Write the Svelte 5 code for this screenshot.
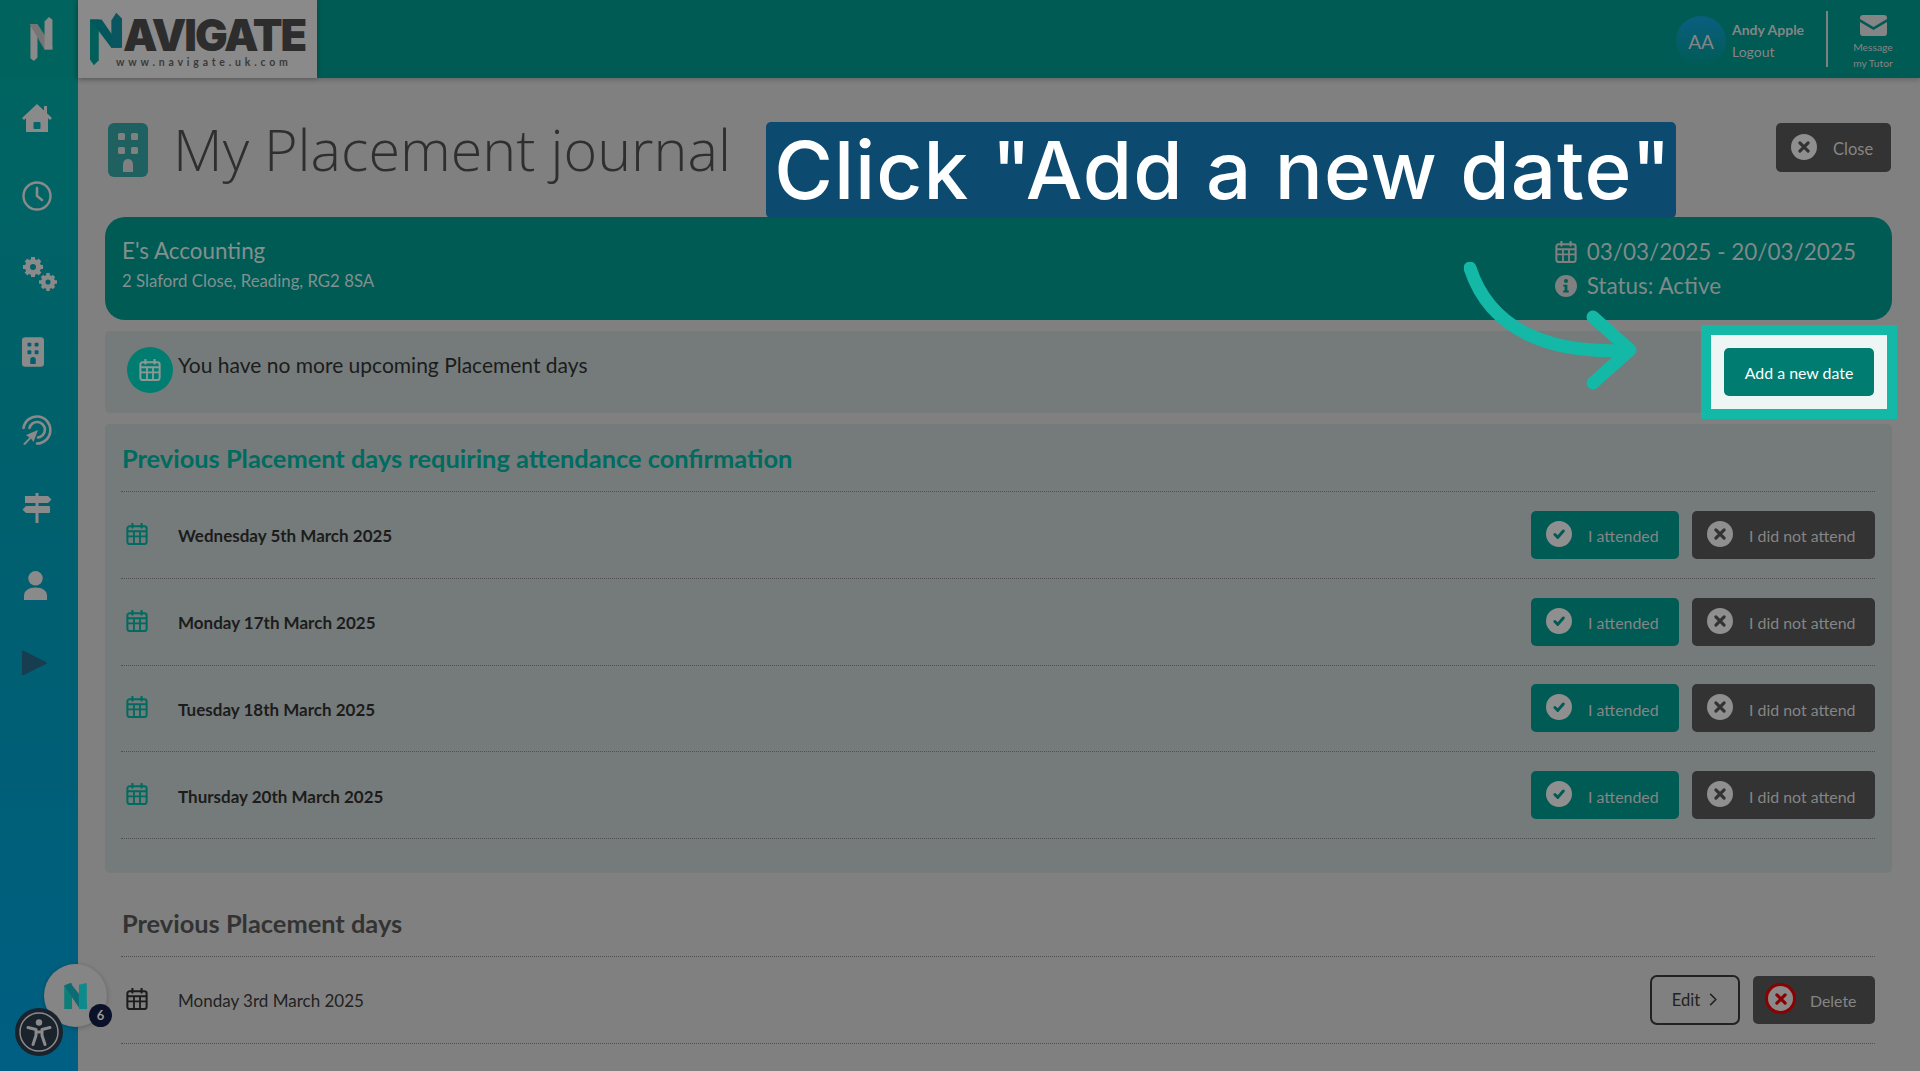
<script>
  const pending = ['Wednesday 5th March 2025', 'Monday 17th March 2025', 'Tuesday 18th March 2025', 'Thursday 20th March 2025'];
</script>

{#snippet cal(cls)}
  <svg class={cls} viewBox="0 0 24 24" aria-hidden="true">
    <path d="M7 1v4M17 1v4" fill="none" stroke="currentColor" stroke-width="2.400" stroke-linecap="round"/>
    <rect x="1.500" y="3.500" width="21" height="19.500" rx="2.500" fill="none" stroke="currentColor" stroke-width="2.200"/>
    <path d="M2 9h20M2 14.500h20M8.700 9v13M15.300 9v13" fill="none" stroke="currentColor" stroke-width="2"/>
  </svg>
{/snippet}
{#snippet cross(cls)}
  <span class={cls}><svg viewBox="0 0 24 24" aria-hidden="true"><path d="M7.500 7.500l9 9M16.500 7.500l-9 9" fill="none" stroke="currentColor" stroke-width="3.400" stroke-linecap="round"/></svg></span>
{/snippet}
{#snippet tick()}
  <span class="ic"><svg viewBox="0 0 24 24" aria-hidden="true"><path d="M7.500 12.500l3.200 3.200 6-7" fill="none" stroke="#005b55" stroke-width="3.200" stroke-linecap="round" stroke-linejoin="round"/></svg></span>
{/snippet}
{#snippet building(cls)}
  <svg class={cls} viewBox="0 0 40 54" aria-hidden="true">
    <rect width="40" height="54" rx="6" fill="currentColor"/>
    <g class="holes"><rect x="10" y="10" width="7" height="7" rx="1.500"/><rect x="23" y="10" width="7" height="7" rx="1.500"/><rect x="10" y="24" width="7" height="7" rx="1.500"/><rect x="23" y="24" width="7" height="7" rx="1.500"/><path d="M15 49v-8a5 5 0 0 1 10 0v8z"/></g>
  </svg>
{/snippet}

<div class="page">
  <aside class="side">
    <div class="brand">
      <svg viewBox="0 0 26 50" class="n" aria-hidden="true">
        <path d="M1 10l8-1v37l-4 4-4-3z" fill="#8a8a8a"/><path d="M0 8h9l17 26v3h-9z" fill="#757575"/><path d="M17 5l5-5 4 3v34h-9z" fill="#8a8a8a"/>
      </svg>
    </div>
    <nav class="nav">
      <span class="slot"><svg viewBox="0 0 30 30" class="si"><path d="M15 1L0 15l2 2 2-1.700V29h22V15.300L28 17l2-2-5-4.700V3h-3v4.500z" fill="currentColor"/><rect x="11.500" y="19" width="7" height="7" rx="1" fill="#01666a"/></svg></span>
      <span class="slot"><svg viewBox="0 0 30 30" class="si"><circle cx="15" cy="15" r="13.500" fill="none" stroke="currentColor" stroke-width="2.400"/><path d="M15 7v8l5 4" fill="none" stroke="currentColor" stroke-width="2.600" stroke-linecap="round"/></svg></span>
      <span class="slot shift"><svg viewBox="0 0 36 36" class="si gears"><g fill="none" stroke="currentColor"><circle cx="11" cy="11" r="5.500" stroke-width="5"/><path d="M11 1v4M11 17v4M1 11h4M17 11h4M4 4l3 3M15 15l3 3M18 4l-3 3M7 15l-3 3" stroke-width="4"/><circle cx="26" cy="26" r="4.800" stroke-width="4.500"/><path d="M26 17v3M26 32v3M17 26h3M32 26h3M20 20l2 2M30 30l2 2M32 20l-2 2M22 30l-2 2" stroke-width="3.500"/></g></svg></span>
      <span class="slot left">{@render building('si bld')}</span>
      <span class="slot"><svg viewBox="0 0 30 30" class="si"><g fill="none" stroke="currentColor" stroke-width="2.600" stroke-linecap="round"><path d="M1.500 13A13.500 13.500 0 1 1 15 28.500"/><path d="M7.500 13A7.800 7.800 0 1 1 16 22.500"/></g><path d="M1 29l6.500-6.500-3.500-2.500 12-5-4.500 12-2.500-3.500L3 30z" fill="currentColor"/></svg></span>
      <span class="slot"><svg viewBox="0 0 30 30" class="si"><path d="M13.500 0h3v3H26l3.500 3.500L26 10H16.500v3H27q1 0 1 1v5q0 1-1 1H16.500v10h-3V20H4L.500 16.500 4 13h9.500v-3H3V3h10.500z" fill="currentColor"/></svg></span>
      <span class="slot left1"><svg viewBox="0 0 26 30" class="si person"><circle cx="13" cy="7.500" r="7.500" fill="currentColor"/><path d="M1 30v-4c0-6 5-9 12-9s12 3 12 9v4z" fill="currentColor"/></svg></span>
      <span class="slot left1"><svg viewBox="0 0 26 28" class="si play"><path d="M2 2l22 11c1 .5 1 1.500 0 2L2 26c-1 .5-2 0-2-1V3c0-1 1-1.500 2-1z" fill="#163e50"/></svg></span>
    </nav>
  </aside>

  <div class="main">
    <header class="top">
      <div class="logo">
        <svg viewBox="0 0 34 54" class="logo-n" aria-hidden="true"><path d="M0 7v41l4 6 5-5V7z" fill="#005f5a"/><path d="M0 7h12l20 29v0H22z" fill="#02575c"/><path d="M22 8l5-8 6 6v30H22z" fill="#0b5560"/></svg>
        <div class="logo-t"><span class="word">AVIGATE</span><span class="url">www.navigate.uk.com</span></div>
      </div>
      <div class="user">
        <span class="avatar">AA</span>
        <span class="who"><b>Andy Apple</b><span>Logout</span></span>
        <i class="rule"></i>
        <span class="msg">
          <svg viewBox="0 0 27 21"><path d="M3 0h21a3 3 0 0 1 3 3v1L13.500 12 0 4V3a3 3 0 0 1 3-3z" fill="#858585"/><path d="M0 7l13.500 8L27 7v11a3 3 0 0 1-3 3H3a3 3 0 0 1-3-3z" fill="#858585"/></svg>
          <small>Message</small><small>my Tutor</small>
        </span>
      </div>
    </header>

    <div class="content">
      <div class="title-row">
        <div class="title">{@render building('t-ic')}<h1>My Placement journal</h1></div>
        <button class="btn dark close">{@render cross('ic')}<span>Close</span></button>
      </div>

      <section class="card">
        <div class="place"><h2>E's Accounting</h2><p>2 Slaford Close, Reading, RG2 8SA</p></div>
        <div class="meta">
          <div>{@render cal('m-ic')}<span>03/03/2025 - 20/03/2025</span></div>
          <div><svg class="m-ic" viewBox="0 0 24 24"><circle cx="12" cy="12" r="12" fill="#808080"/><circle cx="12" cy="6.500" r="2.200" fill="#005b55"/><path d="M9 10.500h4.500V17H15v2H9v-2h1.500v-4.500H9z" fill="#005b55"/></svg><span>Status: Active</span></div>
        </div>
      </section>

      <section class="strip">
        <span class="round">{@render cal('r-ic')}</span>
        <p>You have no more upcoming Placement days</p>
      </section>

      <section class="panel">
        <h3 class="teal">Previous Placement days requiring attendance confirmation</h3>
        {#each pending as d}
          <div class="row">
            {@render cal('d-ic')}
            <b>{d}</b>
            <div class="acts">
              <button class="btn green">{@render tick()}<span>I attended</span></button>
              <button class="btn dark not">{@render cross('ic')}<span>I did not attend</span></button>
            </div>
          </div>
        {/each}
      </section>

      <section class="prev">
        <h3>Previous Placement days</h3>
        <div class="row plain">
          {@render cal('d-ic ink')}
          <span class="date">Monday 3rd March 2025</span>
          <div class="acts">
            <button class="edit">Edit <svg viewBox="0 0 10 16"><path d="M2 2l6 6-6 6" fill="none" stroke="currentColor" stroke-width="1.600"/></svg></button>
            <button class="btn dark del">{@render cross('ic red')}<span>Delete</span></button>
          </div>
        </div>
      </section>
    </div>
  </div>

  <div class="callout">Click "Add a new date"</div>
  <svg class="arrow" viewBox="0 0 180 130" aria-hidden="true">
    <path d="M6 6C26 68 86 93 166 88M129 55l37 33-37 33" fill="none" stroke="#13b8a6" stroke-width="13" stroke-linecap="round" stroke-linejoin="round"/>
  </svg>
  <div class="spot"><button class="add">Add a new date</button></div>

  <div class="fab">
    <svg viewBox="0 0 26 30" aria-hidden="true"><path d="M0 3l9-3v30H0z" fill="#0e7f78"/><path d="M0 3l7-3 19 24v6h-8z" fill="#0d6c73"/><path d="M17 2l9-2v30h-9z" fill="#0c8a8c"/></svg>
    <span class="badge">6</span>
  </div>
  <div class="a11y"><svg viewBox="0 0 40 40" aria-hidden="true"><circle cx="20" cy="20" r="19" fill="none" stroke="#8a8a8a" stroke-width="1.500"/><circle cx="20" cy="10.500" r="3.200" fill="#8a8a8a"/><path d="M9 15.500l8 2v6l-3 9M31 15.500l-8 2v6l3 9M17 20h6" fill="none" stroke="#8a8a8a" stroke-width="3" stroke-linecap="round" stroke-linejoin="round"/></svg></div>
</div>

<style>
  :global(body) { margin: 0; background: #808080; }
  .page { position: relative; display: flex; width: 1920px; height: 1071px; overflow: hidden; font-family: Lato, "Open Sans", sans-serif; background: #808080; color: #1c1c1c; }
  h1, h2, h3, p { margin: 0; }
  button { font: inherit; border: 0; padding: 0; }

  .side { flex: 0 0 78px; background: linear-gradient(180deg, #00655f 0%, #005f72 60%, #005f83 100%); display: flex; flex-direction: column; }
  .brand { height: 78px; display: flex; align-items: center; justify-content: center; background: #00635d; padding-left: 4px; box-sizing: border-box; }
  .n { width: 24px; height: 44px; }
  .nav { display: flex; flex-direction: column; margin-top: 1px; padding-right: 4px; }
  .slot { height: 78px; display: flex; align-items: center; justify-content: center; color: #8a8a8a; }
  .slot.shift { padding-left: 6px; }
  .slot.left { padding-right: 8px; }
  .slot.left1 { padding-right: 4px; }
  .si { width: 30px; height: 30px; }
  .gears { width: 36px; height: 36px; }
  .bld { width: 22px; height: 30px; }
  .bld .holes { fill: #015f72; }
  .person { width: 25px; height: 29px; margin-top: -2px; }
  .play { width: 26px; height: 28px; margin-top: -2px; }

  .main { flex: 1; min-width: 0; display: flex; flex-direction: column; }
  .top { height: 78px; background: #005b55; display: flex; justify-content: space-between; box-shadow: 0 2px 5px rgba(0,0,0,.2); }
  .logo { width: 239px; height: 78px; background: #8a8a8a; display: flex; padding: 12px 0 0 12px; box-sizing: border-box; box-shadow: 0 0 6px rgba(0,0,0,.2); }
  .logo-n { width: 33px; height: 54px; flex: none; }
  .logo-t { display: flex; flex-direction: column; }
  .word { font: 900 43.500px/32px Inter, sans-serif; letter-spacing: -2px; color: #2d2d2d; margin-top: 7px; }
  .url { font: 700 10.500px/14px Lato, sans-serif; letter-spacing: 3.800px; color: #3a3a3a; margin-left: -7px; margin-top: 4px; white-space: nowrap; }

  .user { display: flex; align-items: center; color: #858585; }
  .avatar { width: 50px; height: 50px; border-radius: 50%; background: linear-gradient(180deg, #0a5f80, #005b55); display: flex; align-items: center; justify-content: center; font-size: 19px; margin-top: 4px; }
  .who { display: flex; flex-direction: column; margin-left: 6px; font-size: 14px; line-height: 22px; width: 94px; margin-top: 4px; }
  .who b { font-weight: 700; }
  .rule { width: 2px; height: 56px; background: #808080; }
  .msg { width: 90px; display: flex; flex-direction: column; align-items: center; line-height: 16px; margin-top: 8px; padding-right: 2px; }
  .msg svg { width: 27px; height: 21px; margin-bottom: 3px; }
  .msg small { font-size: 10.300px; white-space: nowrap; }

  .content { padding: 45px 28px 0 27px; }
  .title-row { height: 94px; display: flex; justify-content: space-between; align-items: flex-start; }
  .title { display: flex; align-items: flex-start; padding-left: 3px; }
  .t-ic { width: 40px; height: 54px; color: #1f6060; }
  .t-ic .holes { fill: #808080; }
  h1 { font-family: "Open Sans", sans-serif; font-weight: 300; font-size: 57.500px; line-height: 54px; color: #2f2f2f; margin-left: 25px; margin-top: -1px; white-space: nowrap; }

  .btn { display: flex; align-items: center; height: 48px; border-radius: 5px; box-sizing: border-box; padding-left: 15px; color: #858585; font-size: 15.900px; gap: 16px; }
  .btn span:last-child { margin-top: 2px; }
  .btn.dark { background: #333; }
  .btn.green { background: #005b55; width: 148px; }
  .btn.not { width: 183px; }
  .close { width: 115px; height: 49px; margin-right: 1px; font-size: 16.500px; }
  .ic { width: 26px; height: 26px; border-radius: 50%; background: #8f8f8f; color: #333; display: flex; align-items: center; justify-content: center; margin-top: -2px; flex: none; }
  .ic svg { width: 22px; height: 22px; }
  :global(.ic.red) { width: 25px; height: 25px; color: #8b0000; box-shadow: 0 0 0 3px #8b0000; background: #8a8a8a; margin-left: 1px; }

  .card { height: 103px; background: #005b55; border-radius: 20px; display: flex; justify-content: space-between; padding: 18px 36px 0 17px; box-sizing: border-box; color: #82908e; }
  h2 { font-weight: 400; font-size: 22.400px; line-height: 32px; }
  .card p { font-size: 16.800px; line-height: 28px; }
  .meta { font-size: 22.500px; line-height: 34px; color: #7f8a88; }
  .meta div { display: flex; align-items: center; gap: 10px; }
  .m-ic { width: 22px; height: 22px; color: #808080; }

  .strip { margin-top: 11px; height: 82px; background: #747b7a; border-radius: 5px; display: flex; padding: 16px 22px; box-sizing: border-box; }
  .round { width: 46px; height: 46px; border-radius: 50%; background: #007d70; display: flex; align-items: center; justify-content: center; color: #8b9a98; flex: none; }
  .r-ic { width: 22px; height: 22px; }
  .strip p { font-size: 21px; line-height: 36px; margin-left: 5px; color: #1c1c1c; }

  .panel { margin-top: 11px; background: #747b7a; padding: 0 17px 35px 16px; border-radius: 5px; height: 449px; box-sizing: border-box; }
  h3 { font-size: 25.400px; font-weight: 700; line-height: 69px; height: 67px; padding-left: 1px; border-bottom: 1px dotted #4f4f4f; color: #333; }
  h3.teal { color: #006b60; }
  .row { height: 86.750px; box-sizing: border-box; border-bottom: 1px dotted #4f4f4f; display: flex; align-items: center; font-size: 17px; }
  .row b, .date { margin-top: 2px; }
  .d-ic { width: 22px; height: 22px; color: #006b60; margin: -2px 30px 0 5px; flex: none; }
  :global(.d-ic.ink) { color: #1c1c1c; }
  .acts { margin-left: auto; display: flex; gap: 13px; align-items: center; }

  .prev { margin-top: 16px; padding: 0 17px 0 16px; }
  .plain { color: #222; }
  .edit { width: 90px; height: 50px; border: 2px solid #222; border-radius: 7px; background: transparent; color: #222; font-size: 16.500px; display: flex; align-items: center; justify-content: center; gap: 8px; box-sizing: border-box; }
  .edit svg { width: 10px; height: 15px; }
  .del { width: 122px; gap: 17px; padding-left: 14px; }

  .callout { position: absolute; left: 766px; top: 122px; width: 910px; height: 96px; background: #0d4a70; border-radius: 5px; color: #fff; font: 500 80px/96px Inter, "Open Sans", sans-serif; letter-spacing: 1px; text-indent: 4px; text-align: center; white-space: nowrap; }
  .arrow { position: absolute; left: 1464px; top: 262px; width: 180px; height: 130px; }
  .spot { position: absolute; left: 1701px; top: 325px; width: 196px; height: 94px; box-sizing: border-box; border: 10px solid #13b8a6; background: #eef6f5; display: flex; align-items: center; justify-content: center; }
  .add { width: 150px; height: 48px; background: #007d70; color: #fff; border-radius: 5px; font-size: 15.900px; }

  .fab { position: absolute; left: 44px; top: 964px; width: 63px; height: 63px; border-radius: 50%; background: #858585; box-shadow: 0 1px 5px rgba(0,0,0,.25); display: flex; align-items: center; justify-content: center; }
  .fab svg { width: 25px; height: 26px; }
  .badge { position: absolute; left: 45px; top: 40px; width: 23px; height: 23px; border-radius: 50%; background: #0a1128; color: #9a9a9a; font: 700 13px/23px Lato, sans-serif; text-align: center; }
  .a11y { position: absolute; left: 15px; top: 1008px; width: 48px; height: 48px; border-radius: 50%; background: #1a222c; display: flex; align-items: center; justify-content: center; }
  .a11y svg { width: 40px; height: 40px; }
</style>
